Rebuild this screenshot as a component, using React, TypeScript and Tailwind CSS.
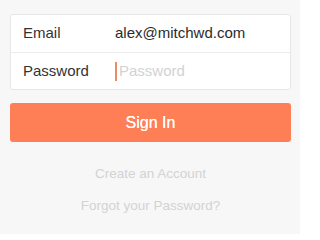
export default function App() {
  return (
    <div className="min-h-[234px] w-[300px] bg-[#f7f7f7] pl-[10px] pr-[9px] pt-[14px] font-['Liberation_Sans',Arial,sans-serif]">
      <div className="overflow-hidden rounded-[3px] border border-[#e7e7e7] bg-white">
        <div className="flex h-[37px] items-center pl-[12px] text-[15px] text-[#333]">
          <span className="w-[92px]">Email</span>
          <span className="text-[#2b2b2b]">alex@mitchwd.com</span>
        </div>
        <div className="flex h-[37px] items-center border-t border-[#ececec] pl-[12px] text-[15px] text-[#333]">
          <span className="w-[92px]">Password</span>
          <span className="mr-[2px] h-[19px] w-[2px] bg-[#e98d66]" />
          <input
            type="password"
            placeholder="Password"
            className="min-w-0 flex-1 bg-transparent text-[15px] outline-none placeholder:text-[#d2d2d2]"
          />
        </div>
      </div>

      <button className="mt-[13px] flex h-[39px] w-full items-center justify-center rounded-[3px] bg-[#fe7f55] text-[16px] text-white [text-shadow:0_0_0.4px_#fff]">
        Sign In
      </button>

      <div className="mt-[24px] flex flex-col items-center gap-[16px] text-[13.5px] leading-[16px] text-[#d3d3d3]">
        <span>Create an Account</span>
        <span>Forgot your Password?</span>
      </div>
    </div>
  );
}
